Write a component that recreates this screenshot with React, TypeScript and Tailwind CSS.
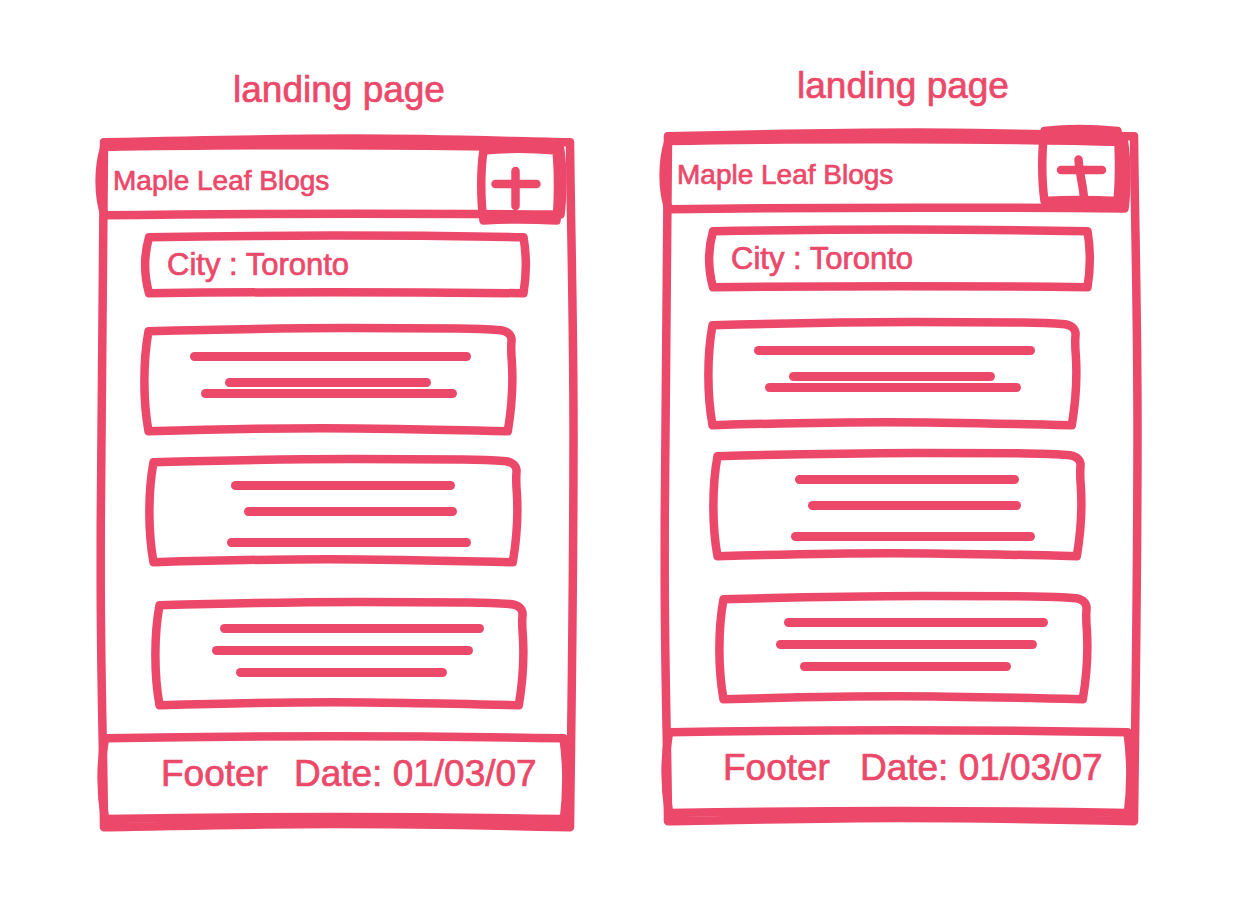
import React from "react";

type OutlineProps = { viewBox: string; d: string };

function Outline({ viewBox, d }: OutlineProps) {
  return (
    <svg
      aria-hidden="true"
      className="pointer-events-none absolute inset-0 h-full w-full overflow-visible"
      viewBox={viewBox}
      preserveAspectRatio="none"
      fill="none"
      stroke="currentColor"
      strokeWidth="8.5"
      strokeLinecap="round"
      strokeLinejoin="round"
    >
      <path d={d} vectorEffect="non-scaling-stroke" />
    </svg>
  );
}

const SCREEN_OUTLINE =
  "M0 0.300C90 -1.800 160 -3.400 250 -3.400C330 -3.400 400 -1 466 0.300C467 90 469.500 180 469.500 290C469.500 450 467.500 560 466 685.300C390 683.500 310 682 230 682C150 682 80 684 0 685.300C-0.500 610 -3.300 540 -3.300 430C-3.300 260 -1.500 80 0 0.300Z";
const HEADER_OUTLINE =
  "M0.500 0C120 -2.500 330 -2.500 456 1C459 20 459 48 456.500 67.500C330 66.500 130 66.500 0.500 68.200C-6 48 -6 20 0.500 0Z";
const CITY_OUTLINE =
  "M0 0.300C130 -2.100 240 -2.100 374.500 0.300C377.500 18 377.500 38 374.500 56.300C240 54.700 130 54.700 0 56.300C-5 38 -5 18 0 0.300Z";
const CARD_OUTLINE =
  "M0.500 0.200C60 -1.400 130 -2.800 200 -3C260 -3 290 -2.800 310 -2.600C330 -2.500 345 -1.500 353 -0.800C361 0.500 364 5 363.500 10C363 17 363 21 363.800 30C365.500 55 364 75 359.800 100.200C300 98.800 230 97.200 175 97.200C120 97.200 50 98.800 0.500 100.200C-5 70 -5 30 0.500 0.200Z";
const FOOTER_OUTLINE =
  "M1 0.300C150 -2.500 310 -2.500 459.500 0.300C463 25 463 55 460 81C310 78.500 150 78.500 1 81C-3.300 55 -3.300 25 1 0.300Z";

type Bar = { id: string; className: string };
type Card = { id: string; className: string; bars: Bar[] };

const cards: Card[] = [
  {
    id: "first",
    className: "mt-[38px] ml-11 mr-[62px] pt-[21px]",
    bars: [
      { id: "a", className: "ml-[42px] mr-[37px]" },
      { id: "b", className: "mt-[17px] ml-[77px] mr-[77px]" },
      { id: "c", className: "mt-[2px] ml-[53px] mr-[51px]" },
    ],
  },
  {
    id: "second",
    className: "mt-[31px] ml-[49px] mr-[57px] pt-[19px]",
    bars: [
      { id: "a", className: "ml-[78px] mr-[58px]" },
      { id: "b", className: "mt-[17px] ml-[91px] mr-[56px]" },
      { id: "c", className: "mt-[22px] ml-[74px] mr-[42px]" },
    ],
  },
  {
    id: "third",
    className: "mt-[43px] ml-[55px] mr-[51px] pt-[19px]",
    bars: [
      { id: "a", className: "ml-[61px] mr-[35px]" },
      { id: "b", className: "mt-[13px] ml-[53px] mr-[46px]" },
      { id: "c", className: "mt-[13px] ml-[77px] mr-[72px]" },
    ],
  },
];

type ScreenProps = {
  columnClass: string;
  titleClass: string;
  buttonClass: string;
  buttonOutline: string;
  plus: string;
  footerClass: string;
};

function Screen({ columnClass, titleClass, buttonClass, buttonOutline, plus, footerClass }: ScreenProps) {
  return (
    <section className={`min-w-0 flex-1 ${columnClass}`}>
      <h1 className={`pl-1 text-center text-[37px] leading-[44px] ${titleClass}`}>landing page</h1>

      <div className="relative flex flex-col pt-[5px] pb-2">
        <Outline viewBox="0 0 466 685" d={SCREEN_OUTLINE} />

        <header className="relative mr-[9px] flex h-[68px] items-center pb-px pl-[9px]">
          <Outline viewBox="0 0 457 68" d={HEADER_OUTLINE} />
          <h2 className="text-[28px] leading-8">Maple Leaf Blogs</h2>
          <button
            type="button"
            aria-label="Add blog"
            className={`absolute h-[71px] w-[74px] cursor-pointer ${buttonClass}`}
          >
            <Outline viewBox="0 0 74 71" d={buttonOutline} />
            <Outline viewBox="0 0 74 71" d={plus} />
          </button>
        </header>

        <div className="relative mt-[22px] mr-[46px] ml-[45px] h-14">
          <Outline viewBox="0 0 375 56" d={CITY_OUTLINE} />
          <input
            type="text"
            aria-label="City"
            defaultValue="City : Toronto"
            className="h-full w-full bg-transparent pr-4 pb-px pl-[18px] text-[31px] leading-9 outline-none"
          />
        </div>

        {cards.map((card) => (
          <article key={card.id} className={`relative h-[100px] ${card.className}`}>
            <Outline viewBox="0 0 360 100" d={CARD_OUTLINE} />
            {card.bars.map((bar) => (
              <div key={bar.id} className={`h-[9px] rounded-full bg-current ${bar.className}`} />
            ))}
          </article>
        ))}

        <footer
          className={`relative mt-[33px] mr-[6px] flex h-[81px] items-center pb-[10px] text-[37px] leading-[44px] whitespace-nowrap ${footerClass}`}
        >
          <Outline viewBox="0 0 460 81" d={FOOTER_OUTLINE} />
          <span>Footer</span>
          <span>Date: 01/03/07</span>
        </footer>
      </div>
    </section>
  );
}

export default function App() {
  return (
    <main className="flex min-h-screen items-start gap-[98px] bg-white pr-[124px] pb-10 pl-[104px] font-['Liberation_Sans',Arial,sans-serif] text-[#ec486a] [-webkit-text-stroke:0.7px_#ec486a]">
      <Screen
        columnClass="pt-[68px]"
        titleClass="mb-[30px]"
        buttonClass="top-[3px] right-1"
        buttonOutline="M0.500 0.500C20 -1.500 50 -1.500 73.500 0.500C75.500 20 75.500 50 73.500 70.500C50 69.300 20 69.300 0.500 70.500C-2.500 50 -2.500 20 0.500 0.500Z"
        plus="M12.500 34H53.500M32.500 21V56"
        footerClass="gap-[26px] pl-[57px]"
      />
      <Screen
        columnClass="pt-16"
        titleClass="mb-7"
        buttonClass="-top-[11px] right-[7px]"
        buttonOutline="M0.500 1C20 -1.500 50 -1.500 73.500 1C75.500 20 75.500 50 73.500 71C50 69.800 20 69.800 0.500 71C-2.500 50 -2.500 20 0.500 1Z"
        plus="M17 40H58M34.500 29.500C35.500 44 38.500 52 40 68"
        footerClass="gap-[30px] pl-[55px]"
      />
    </main>
  );
}
